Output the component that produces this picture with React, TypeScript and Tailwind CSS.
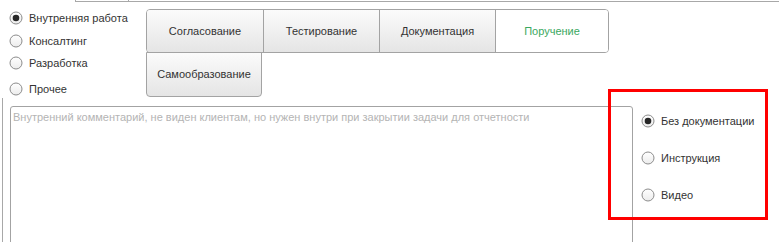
import React from "react";

const FONT = "font-['Arial','Liberation_Sans',sans-serif]";

function Radio({ checked, label }: { checked?: boolean; label: string }) {
  return (
    <div className="flex items-center gap-[6px]">
      <svg width="14" height="14" viewBox="0 0 14 14" className="shrink-0">
        <defs>
          <linearGradient id="rg" x1="0" y1="0" x2="0" y2="1">
            <stop offset="0" stopColor="#ffffff" />
            <stop offset="1" stopColor="#ececec" />
          </linearGradient>
        </defs>
        <circle cx="7" cy="7" r="6" fill="url(#rg)" stroke="#8c8c8c" strokeWidth="1" />
        {checked && <circle cx="7" cy="7" r="3.3" fill="#262626" />}
      </svg>
      <span className="text-[11px] leading-none text-[#333333]">{label}</span>
    </div>
  );
}

const kinds = [
  { label: "Внутренняя работа", checked: true, mt: "mt-[9px]" },
  { label: "Консалтинг", mt: "mt-[9px]" },
  { label: "Разработка", mt: "mt-[8px]" },
  { label: "Прочее", mt: "mt-[12px]" },
];

const topButtons = ["Согласование", "Тестирование", "Документация"];

export default function App() {
  return (
    <div className={`relative w-[779px] h-[242px] overflow-hidden bg-white ${FONT}`}>
      {/* strip left over from the form above */}
      <div className="flex h-[2px]">
        <div className="w-[75px]" />
        <div className="w-[53px] border-l border-b border-[#a8a8a8]" />
        <div className="flex-1 border-l border-b border-[#a8a8a8]" />
      </div>

      <div className="flex h-[96px]">
        {/* work kind */}
        <div className="w-[146px] pl-[9px]">
          {kinds.map((k) => (
            <div key={k.label} className={k.mt}>
              <Radio label={k.label} checked={k.checked} />
            </div>
          ))}
        </div>

        {/* task type buttons */}
        <div className="pt-[7px]">
          <div className="flex h-[44px] w-[463px] rounded-[4px] border border-[#a3a3a3] overflow-hidden">
            {topButtons.map((b, i) => (
              <div
                key={b}
                className={`flex w-[116px] items-center justify-center bg-gradient-to-b from-[#fbfbfb] to-[#e5e5e5] text-[11px] text-[#333333] ${
                  i === 0 ? "" : "border-l border-[#a3a3a3]"
                }`}
              >
                {b}
              </div>
            ))}
            <div className="flex flex-1 items-center justify-center border-l border-[#a3a3a3] bg-white text-[11px] text-[#3aa860]">
              Поручение
            </div>
          </div>
          <div className="-mt-px flex h-[45px] w-[116px] items-center justify-center rounded-b-[4px] border border-[#a3a3a3] bg-gradient-to-b from-[#fbfbfb] to-[#e5e5e5] text-[11px] text-[#333333]">
            Самообразование
          </div>
        </div>
      </div>

      {/* comment + documentation */}
      <div className="ml-[2px] flex h-[144px] border-l border-[#a8a8a8]">
        <div className="ml-[7px] mt-[8px] h-[150px] w-[623px] rounded-t-[3px] border border-[#a3a3a3] px-[2px] pt-[3px] text-[11px] leading-[14px] text-[#b4b4b4]">
          Внутренний комментарий, не виден клиентам, но нужен внутри при закрытии задачи для отчетности
        </div>
        <div className="ml-[8px] flex flex-col pt-[16px]">
          <Radio label="Без документации" checked />
          <div className="mt-[23px]">
            <Radio label="Инструкция" />
          </div>
          <div className="mt-[23px]">
            <Radio label="Видео" />
          </div>
        </div>
      </div>

      {/* highlight frame */}
      <div className="pointer-events-none absolute left-[608px] top-[89px] h-[131px] w-[160px] border-[3px] border-[#ff0000]" />
    </div>
  );
}
